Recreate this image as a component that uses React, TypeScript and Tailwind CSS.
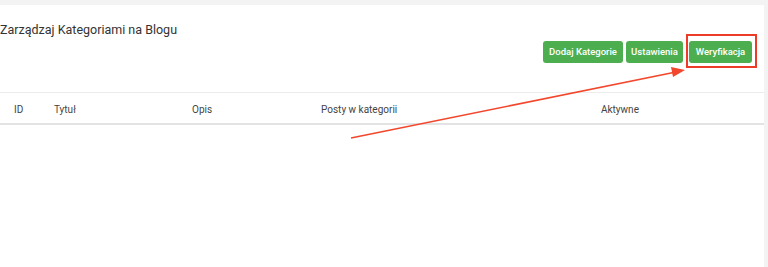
import React from "react";

export default function App() {
  const font = { fontFamily: "Roboto, 'Noto Sans', sans-serif" };
  return (
    <div className="relative w-[768px] h-[267px] bg-[#f3f3f3] pt-[5px] pr-[4px] overflow-hidden" style={font}>
      <div className="bg-white h-full flex flex-col">
        <div className="flex justify-between h-[87px]">
          <div className="pt-[16px] text-[12.5px] text-[#333] leading-[18px]">Zarządzaj Kategoriami na Blogu</div>
          <div className="flex items-start pt-[36px] pr-[12px]">
            <button className="w-[80px] h-[22px] rounded-[3px] bg-[#4cae4f] text-white text-[9.5px] font-medium">Dodaj Kategorie</button>
            <button className="ml-[3px] w-[57px] h-[22px] rounded-[3px] bg-[#4cae4f] text-white text-[9.5px] font-medium">Ustawienia</button>
            <button className="ml-[6px] w-[63px] h-[22px] rounded-[3px] bg-[#4cae4f] text-white text-[9.5px] font-medium">Weryfikacja</button>
          </div>
        </div>
        <div className="border-t border-[#ececec] border-b-2 border-b-[#e3e3e3] h-[33px] flex items-center pt-[2px] text-[10px] text-[#444]">
          <div className="w-[54px] pl-[14px]">ID</div>
          <div className="w-[138px]">Tytuł</div>
          <div className="w-[129px]">Opis</div>
          <div className="w-[280px]">Posty w kategorii</div>
          <div>Aktywne</div>
        </div>
      </div>
      <div className="absolute left-[686px] top-[34px] w-[71px] h-[34px] border-2 border-[#ec3b26]" />
      <svg className="absolute left-0 top-0" width="768" height="267">
        <line x1="351" y1="138" x2="676" y2="72" stroke="#f2472c" strokeWidth="1.6" />
        <polygon points="685,70 671,67 673,77" fill="#f2472c" />
      </svg>
    </div>
  );
}
